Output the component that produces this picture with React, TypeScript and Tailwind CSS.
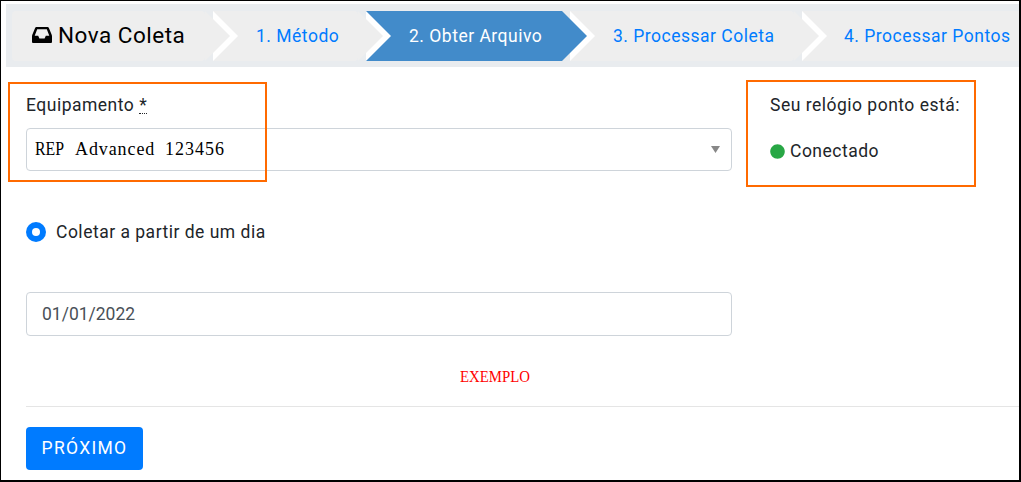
import React from 'react';
import clsx from 'clsx';
import { FaCircle } from 'react-icons/fa';

const steps = [
  { label: '1. Método', width: 'w-[145px]', padding: 'pl-[43px]' },
  { label: '2. Obter Arquivo', width: 'w-[196px]', padding: 'pl-[43px]', active: true },
  { label: '3. Processar Coleta', width: 'w-[224px]', padding: 'pl-[43px]' },
  { label: '4. Processar Pontos', width: 'w-[217px]', padding: 'pl-[42px]', last: true },
];

const InboxIcon: React.FC<{ className?: string }> = ({ className }) => (
  <svg className={className} width="20" height="16" viewBox="0 0 20 16" fill="currentColor">
    <path
      fillRule="evenodd"
      d="M4.4 0H15.6Q16.5 0 16.9 .9L19.6 7.6Q20 8.6 20 9.6V15Q20 16 19 16H1Q0 16 0 15V9.6Q0 8.6 .4 7.6L3.1 .9Q3.5 0 4.4 0ZM5.2 2.3L2.7 8.8H6.2L7.4 11.5H12.6L13.8 8.8H17.3L14.8 2.3Z"
    />
  </svg>
);

// Arrow head on the right side of a step, with its white outline
const StepArrow: React.FC<{ active?: boolean }> = ({ active }) => (
  <svg className="absolute left-full top-0 z-10" width="33" height="50" viewBox="0 0 33 50">
    <path d="M8 0L33 25L8 50Z" fill="#fff" />
    <path d="M0 0L25 25L0 50Z" fill={active ? '#428bca' : '#eeeeee'} />
  </svg>
);

const StepBar: React.FC = () => (
  <ol className="flex gap-2 h-[63px] pt-[7px] pl-1.5 bg-[#e9ecef]">
    <li className="relative flex items-center w-[193px] h-[50px] pl-5 rounded bg-[#eeeeee] text-black shrink-0">
      <InboxIcon className="mr-1.5 mt-[-2px]" />
      <h1 className="mt-[-2px] text-[22.5px] leading-[27px] tracking-[0.5px] whitespace-nowrap">Nova Coleta</h1>
      <StepArrow />
    </li>
    {steps.map((step) => (
      <li
        key={step.label}
        className={clsx(
          'relative flex items-center h-[50px] leading-[27px] whitespace-nowrap shrink-0',
          step.width,
          step.padding,
          step.active ? 'bg-[#428bca] text-white' : 'bg-[#eeeeee] text-[#007bff]',
          !step.active && !step.last && 'rounded-r'
        )}
      >
        <a>{step.label}</a>
        {!step.last && <StepArrow active={step.active} />}
      </li>
    ))}
  </ol>
);

const App: React.FC = () => {
  return (
    <div className="w-[1021px] h-[482px] overflow-hidden border-t border-l border-r-2 border-b-2 border-black bg-white pt-[3px] pl-[5px] font-['Roboto',sans-serif] text-[17.5px] leading-[27px] tracking-[0.5px] text-[#212529]">
      <StepBar />

      <div className="flex h-[120px] pt-[13px]">
        {/* Equipment */}
        <div className="relative w-[740px] pl-5">
          <div className="absolute left-[2px] top-[2px] z-10 w-[259px] h-[100px] border-2 border-[#ff6a00] pointer-events-none" />
          <label className="block h-[27px] mt-3">
            Equipamento{' '}
            <abbr className="inline-block leading-[15px] no-underline border-b border-dotted border-[#212529]">*</abbr>
          </label>
          <div className="flex items-center justify-between w-[706px] h-[43px] mt-[9px] pl-2 pr-[11px] rounded border border-[#ced4da]">
            <span className="flex gap-[10px] mt-[-1px] font-['Liberation_Serif',serif] text-[18px] text-black">
              <span className="w-[30px] tracking-normal origin-left scale-x-[0.88]">REP</span>
              <span className="w-[80px] tracking-[0.9px]">Advanced</span>
              <span className="w-[60px] tracking-[1px]">123456</span>
            </span>
            <svg width="9" height="7" viewBox="0 0 9 7">
              <path d="M0 0H9L4.5 7Z" fill="#888" />
            </svg>
          </div>
        </div>

        {/* Clock status */}
        <div className="w-[230px] h-[107px] pl-[22px] pt-2.5 border-2 border-[#ff6a00]">
          <p className="whitespace-nowrap">Seu relógio ponto está:</p>
          <p className="flex items-center mt-[19px]">
            <FaCircle className="w-[15px] h-[15px] mt-[-1px] mr-[5px] text-[#28a745]" />
            Conectado
          </p>
        </div>
      </div>

      <div className="pl-5">
        <label className="flex items-center h-[27px] mt-[31px]">
          <span className="flex items-center justify-center w-5 h-5 mr-2.5 rounded-full bg-[#007bff]">
            <span className="w-2 h-2 rounded-full bg-white" />
          </span>
          <span className="pt-0.5">Coletar a partir de um dia</span>
        </label>
        <div className="flex items-center w-[706px] h-[44px] mt-[47px] pl-[15px] rounded border border-[#ced4da] tracking-normal text-[#495057]">
          01/01/2022
        </div>
        <div className="flex h-[70px] pt-[30px] pl-[434px] font-['Liberation_Serif',serif] text-[17px] leading-[22px] tracking-normal text-[#ff0000]">
          <span className="w-[70px] origin-left scale-x-[0.87]">EXEMPLO</span>
        </div>
        <hr className="border-t border-[#e5e5e5]" />
        <button className="block w-[117px] h-[43px] mt-5 rounded bg-[#007bff] text-white tracking-[1.3px]">PRÓXIMO</button>
      </div>
    </div>
  );
};

export default App;
